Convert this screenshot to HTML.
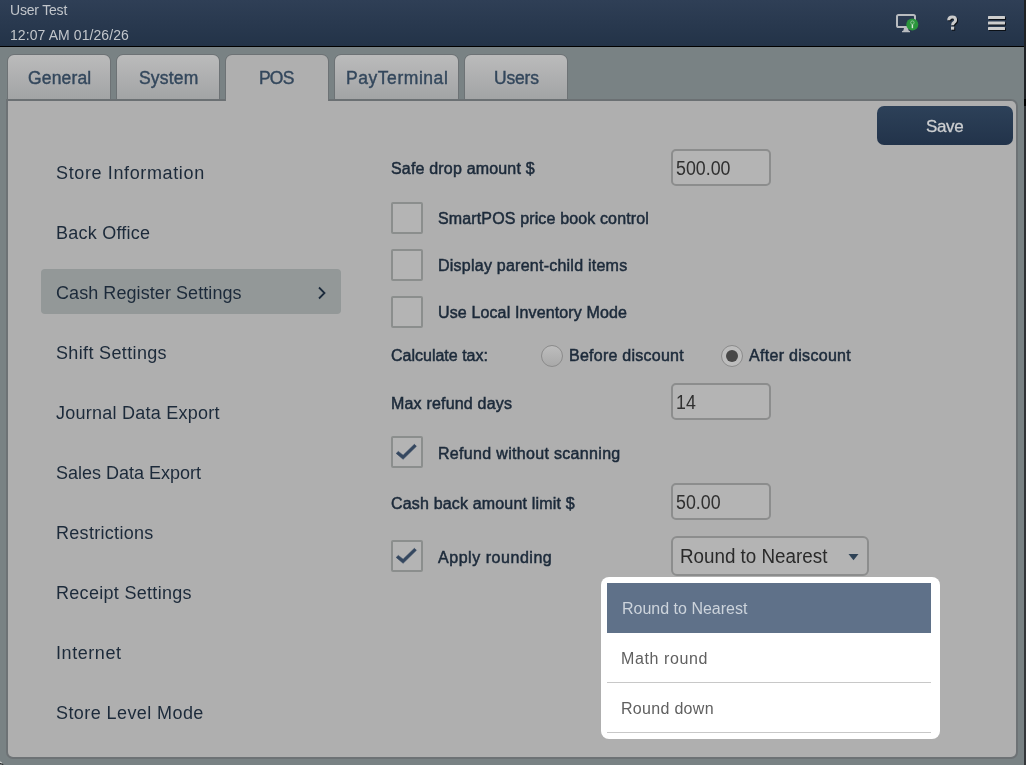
<!DOCTYPE html>
<html><head><meta charset="utf-8">
<style>
*{margin:0;padding:0;box-sizing:border-box}
html,body{width:1026px;height:765px;overflow:hidden;background:#798284;font-family:"Liberation Sans",sans-serif}
.a{position:absolute}
.t{position:absolute;line-height:1;white-space:nowrap}
#hdr{left:0;top:0;width:1024px;height:46px;background:linear-gradient(#2f3f56,#233348);border-bottom:0}
#hline{left:0;top:46px;width:1024px;height:1px;background:#000}
#rstrip{left:1024px;top:0;width:2px;height:765px;background:linear-gradient(#1f2225 0,#1f2225 99px,#000 99px,#000 106px,#2c2f32 106px,#35383b 765px)}
.tab{position:absolute;top:55px;height:44px;border-radius:6px 6px 0 0;background:linear-gradient(#bbbbbb,#a2a4a5);box-shadow:-1px 0 0 #6d7275,1px 0 0 #6d7275,0 -1px 0 #6d7275}
.tab.on{background:#afafaf;height:46px}
.tabtx{color:#33475c;font-size:17.5px}
#panel{left:8px;top:101px;width:1008px;height:656px;background:#afafaf;border-radius:0 5px 5px 5px;box-shadow:0 0 0 2px #6d7275}
#tabline{left:8px;top:99px;width:1003px;height:2px;background:#6b7073}
.mi{color:#1c2a3a;font-size:18px}
.lb{color:#1c2a3a;font-size:16px;-webkit-text-stroke:0.5px #1c2a3a}
.cb{position:absolute;left:391px;width:32px;height:32px;border:2px solid #8b8e8d;background:#b4b4b4;border-radius:2px}
.inp{position:absolute;left:671px;width:100px;height:37px;border:2px solid #8c8d8d;background:#b4b4b4;border-radius:5px}
.iv{color:#303030;font-size:20px;transform:scaleX(.89);transform-origin:0 0}
.pi{color:#606060;font-size:16px}
</style></head><body><div style="position:absolute;left:0;top:0;width:1026px;height:765px;will-change:transform">
<div id="hdr" class="a"></div>
<div id="hline" class="a"></div>
<div id="rstrip" class="a"></div>
<svg class="a" style="left:0;top:755px" width="8" height="10" viewBox="0 0 8 10"><path d="M0 8.5 Q2 8.5 3.5 10" fill="none" stroke="#2a2a2a" stroke-width="1"/><path d="M0 7 Q1.2 7.3 1.8 8" fill="none" stroke="#e8e8e8" stroke-width="1"/></svg>
<div class="t" style="left:10px;top:3px;font-size:14px;color:#c2c6cb;letter-spacing:-.2px">User Test</div>
<div class="t" style="left:10px;top:28px;font-size:14px;color:#c2c6cb;letter-spacing:.08px">12:07 AM 01/26/26</div>

<!-- header icons -->
<svg class="a" style="left:890px;top:8px" width="130" height="30" viewBox="890 8 130 30">
  <rect x="897" y="15" width="18" height="12" rx="1.6" fill="none" stroke="#b9bcc0" stroke-width="2"/>
  <path d="M904 28 L908 28 L908.6 30.6 L910 31.2 L910 32.3 L902 32.3 L902 31.2 L903.4 30.6 Z" fill="#b9bcc0"/>
  <circle cx="912.3" cy="24.5" r="6" fill="#2a963c"/>
  <rect x="911.7" y="24.2" width="1.4" height="4" fill="#d8e8d8"/>
  <circle cx="912.4" cy="22.6" r="1.7" fill="none" stroke="#8cc493" stroke-width="1"/>
  <g transform="translate(1,1)" opacity=".75">
    <path d="M948.7 20.2 Q948.7 17 952.2 17 Q955.6 17 955.6 19.9 Q955.6 21.8 953.9 22.7 Q952.6 23.4 952.6 25.3" fill="none" stroke="#000" stroke-width="3"/>
    <rect x="951" y="26.6" width="3.2" height="3.1" fill="#000"/>
  </g>
  <path d="M948.7 20.2 Q948.7 17 952.2 17 Q955.6 17 955.6 19.9 Q955.6 21.8 953.9 22.7 Q952.6 23.4 952.6 25.3" fill="none" stroke="#cbcbcb" stroke-width="3"/>
  <rect x="951" y="26.6" width="3.2" height="3.1" fill="#cbcbcb"/>
  <g fill="#000" opacity=".7"><rect x="989" y="17" width="17" height="3" rx=".5"/><rect x="989" y="22.5" width="17" height="3" rx=".5"/><rect x="989" y="28" width="17" height="3" rx=".5"/></g>
  <g fill="#cdcdcd"><rect x="988" y="16" width="17" height="3" rx=".5"/><rect x="988" y="21.5" width="17" height="3" rx=".5"/><rect x="988" y="27" width="17" height="3" rx=".5"/></g>
</svg>

<div id="panel" class="a"></div>
<div id="tabline" class="a"></div>

<div class="tab" style="left:8px;width:102px"></div>
<div class="tab" style="left:117px;width:102px"></div>
<div class="tab on" style="left:226px;width:102px"></div>
<div class="tab" style="left:335px;width:123px"></div>
<div class="tab" style="left:465px;width:102px"></div>
<div class="t tabtx" style="left:28px;top:70px;letter-spacing:.15px;-webkit-text-stroke:0.4px #33475c">General</div>
<div class="t tabtx" style="left:139px;top:70px;letter-spacing:.2px;-webkit-text-stroke:0.4px #33475c">System</div>
<div class="t tabtx" style="left:259px;top:70px;letter-spacing:-.8px;-webkit-text-stroke:0.4px #33475c">POS</div>
<div class="t tabtx" style="left:346px;top:70px;letter-spacing:.55px;-webkit-text-stroke:0.4px #33475c">PayTerminal</div>
<div class="t tabtx" style="left:494px;top:70px;letter-spacing:-.2px;-webkit-text-stroke:0.4px #33475c">Users</div>

<!-- save -->
<div class="a" style="left:877px;top:106px;width:136px;height:39px;border-radius:7px;background:linear-gradient(#2d4159,#22334a)"></div>
<div class="t" style="left:926px;top:118px;font-size:17px;color:#cdcfd1;letter-spacing:-.35px;-webkit-text-stroke:.3px #cdcfd1">Save</div>

<!-- left menu -->
<div class="a" style="left:41px;top:269px;width:300px;height:45px;border-radius:4px;background:#939898"></div>
<div class="t mi" style="left:56px;top:164px;letter-spacing:0.63px">Store Information</div>
<div class="t mi" style="left:56px;top:224px;letter-spacing:0.24px">Back Office</div>
<div class="t mi" style="left:56px;top:284px;letter-spacing:0.07px">Cash Register Settings</div>
<div class="t mi" style="left:56px;top:344px;letter-spacing:0.35px">Shift Settings</div>
<div class="t mi" style="left:56px;top:404px;letter-spacing:0.25px">Journal Data Export</div>
<div class="t mi" style="left:56px;top:464px">Sales Data Export</div>
<div class="t mi" style="left:56px;top:524px;letter-spacing:0.30px">Restrictions</div>
<div class="t mi" style="left:56px;top:584px;letter-spacing:0.30px">Receipt Settings</div>
<div class="t mi" style="left:56px;top:644px;letter-spacing:0.57px">Internet</div>
<div class="t mi" style="left:56px;top:704px;letter-spacing:0.42px">Store Level Mode</div>
<svg class="a" style="left:316px;top:285px" width="12" height="16" viewBox="0 0 12 16"><path d="M3 2.5 L8.5 8 L3 13.5" fill="none" stroke="#1c2b3c" stroke-width="1.8"/></svg>

<!-- form -->
<div class="t lb" style="left:391px;top:161px;letter-spacing:0.18px">Safe drop amount $</div>
<div class="inp" style="top:149px"></div>
<div class="t iv" style="left:676px;top:158px">500.00</div>

<div class="cb" style="top:202px"></div>
<div class="t lb" style="left:438px;top:211px;letter-spacing:0.14px">SmartPOS price book control</div>
<div class="cb" style="top:249px"></div>
<div class="t lb" style="left:438px;top:258px;letter-spacing:0.24px">Display parent-child items</div>
<div class="cb" style="top:296px"></div>
<div class="t lb" style="left:438px;top:305px;letter-spacing:0.13px">Use Local Inventory Mode</div>

<div class="t lb" style="left:391px;top:348px">Calculate tax:</div>
<div class="a" style="left:541px;top:345px;width:22px;height:22px;border-radius:50%;border:1px solid #8a8a8a;background:linear-gradient(#bdbdbd,#a9a9a9)"></div>
<div class="t lb" style="left:569px;top:348px;letter-spacing:0.25px">Before discount</div>
<div class="a" style="left:721px;top:345px;width:22px;height:22px;border-radius:50%;border:1px solid #8a8a8a;background:#bdbdbd"></div>
<div class="a" style="left:726px;top:350px;width:12px;height:12px;border-radius:50%;background:#474747"></div>
<div class="t lb" style="left:749px;top:348px;letter-spacing:0.30px">After discount</div>

<div class="t lb" style="left:391px;top:396px;letter-spacing:0.19px">Max refund days</div>
<div class="inp" style="top:383px"></div>
<div class="t iv" style="left:676px;top:392px">14</div>

<div class="cb" style="top:436px"></div>
<svg class="a" style="left:391px;top:436px" width="32" height="32" viewBox="0 0 32 32"><path d="M5.2 17.4 L7.3 15.4 L12.1 19.2 L23.4 8.3 L25.4 10.3 L12.1 23.3 Z" fill="#34475f" stroke="#34475f" stroke-width=".6" stroke-linejoin="round"/></svg>
<div class="t lb" style="left:438px;top:446px;letter-spacing:0.32px">Refund without scanning</div>

<div class="t lb" style="left:391px;top:496px;letter-spacing:0.17px">Cash back amount limit $</div>
<div class="inp" style="top:483px"></div>
<div class="t iv" style="left:676px;top:492px">50.00</div>

<div class="cb" style="top:540px"></div>
<svg class="a" style="left:391px;top:540px" width="32" height="32" viewBox="0 0 32 32"><path d="M5.2 17.4 L7.3 15.4 L12.1 19.2 L23.4 8.3 L25.4 10.3 L12.1 23.3 Z" fill="#34475f" stroke="#34475f" stroke-width=".6" stroke-linejoin="round"/></svg>
<div class="t lb" style="left:438px;top:550px;letter-spacing:0.54px">Apply rounding</div>

<div class="a" style="left:671px;top:536px;width:198px;height:40px;border:2px solid #8c8d8d;background:#b4b4b4;border-radius:6px"></div>
<div class="t" style="left:680px;top:546px;font-size:20px;color:#2a2a2a;transform:scaleX(.94);transform-origin:0 0">Round to Nearest</div>
<svg class="a" style="left:848px;top:554px" width="12" height="8" viewBox="0 0 12 8"><path d="M0.5 0 L10.5 0 L5.5 6.3 Z" fill="#2e4256"/></svg>

<!-- popup -->
<div class="a" style="left:601px;top:577px;width:339px;height:162px;background:#fff;border-radius:8px"></div>
<div class="a" style="left:607px;top:583px;width:324px;height:50px;background:#5f7189"></div>
<div class="a" style="left:607px;top:682px;width:324px;height:1px;background:#c8c8c8"></div>
<div class="a" style="left:607px;top:732px;width:324px;height:1px;background:#c8c8c8"></div>
<div class="t pi" style="left:622px;top:601px;color:#cdd4dc">Round to Nearest</div>
<div class="t pi" style="left:621px;top:651px;letter-spacing:.6px">Math round</div>
<div class="t pi" style="left:621px;top:701px;letter-spacing:.3px">Round down</div>
</div></body></html>
